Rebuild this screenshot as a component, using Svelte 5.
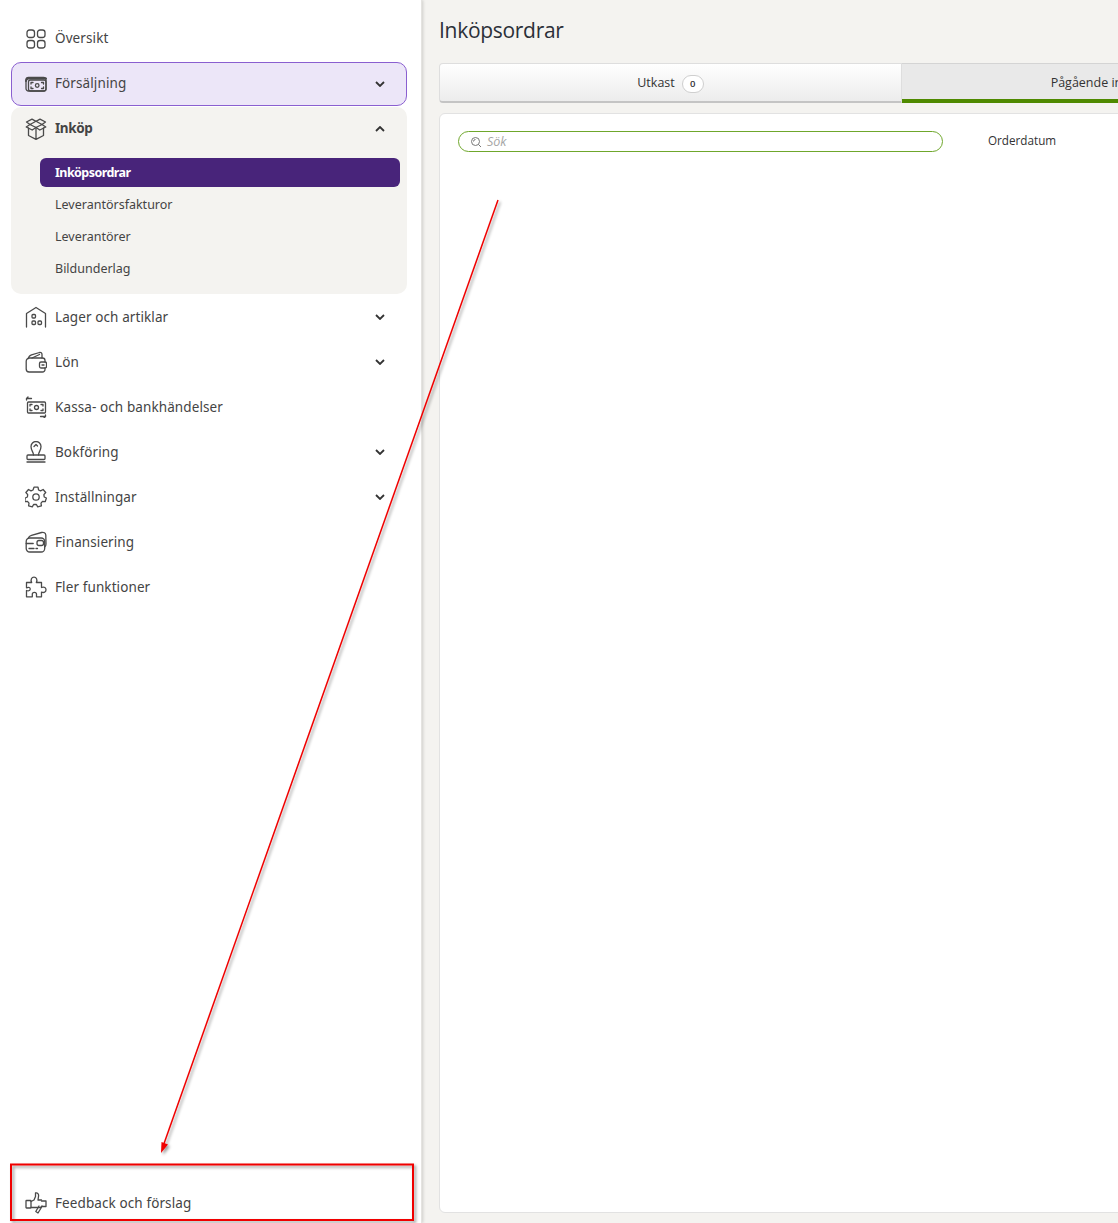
<script>
  const subItems = ["Inköpsordrar", "Leverantörsfakturor", "Leverantörer", "Bildunderlag"]
  const activeSub = "Inköpsordrar"
</script>

{#snippet chevron(up)}
  <svg class="chevron" viewBox="0 0 10 6" width="10" height="6">
    <path d={up ? "M1 5l4-4 4 4" : "M1 1l4 4 4-4"} />
  </svg>
{/snippet}

<div class="page">
  <aside class="sidebar">
    <nav class="nav">
      <a class="item first">
        <svg class="icon" viewBox="0 0 22 22">
          <rect x="2" y="2" width="7.500" height="7.500" rx="2.500" />
          <rect x="12.500" y="2" width="7.500" height="7.500" rx="2.500" />
          <rect x="2" y="12.500" width="7.500" height="7.500" rx="2.500" />
          <rect x="12.500" y="12.500" width="7.500" height="7.500" rx="2.500" />
        </svg>
        <span>Översikt</span>
      </a>

      <a class="item selected">
        <svg class="icon" viewBox="0 0 22 22">
          <rect x="1" y="4.500" width="20" height="13.500" rx="2.500" />
          <path d="M1 8a2.500 2.500 0 0 1 2.500-2.500H21" stroke-width="2" />
          <rect x="3.500" y="7" width="17.500" height="11" rx="2" />
          <circle cx="12.200" cy="12.500" r="1.800" />
          <path d="M6 11v-1.500h2M18.500 14v1.500h-2M6 14v1.500h2M18.500 11V9.500h-2" />
        </svg>
        <span>Försäljning</span>
        {@render chevron(false)}
      </a>

      <div class="group">
        <a class="item open">
          <svg class="icon" viewBox="0 0 22 22">
            <path d="M11 9.500l6-3-6-3.200-6 3.200zM5 6.500L1.200 9l6 3L11 9.500l3.800 2.500 6-3L17 6.500" />
            <path d="M5 6.500L1.500 4l5.500-2.800L11 3.300l4-2.100L20.500 4 17 6.500" />
            <path d="M3.500 10v7.500l7.500 3.800 7.500-3.800V10M11 9.500v11.800" />
          </svg>
          <span>Inköp</span>
          {@render chevron(true)}
        </a>
        <ul class="sublist">
          {#each subItems as sub}
            <li class:active={sub === activeSub}>{sub}</li>
          {/each}
        </ul>
      </div>

      <a class="item">
        <svg class="icon" viewBox="0 0 22 22">
          <path d="M1.500 21V7.500L11 1.500l9.500 6V21" />
          <rect x="7" y="8.500" width="3.500" height="3.500" rx="1" />
          <rect x="7" y="15" width="3.500" height="3.500" rx="1" />
          <rect x="13" y="15" width="3.500" height="3.500" rx="1" />
        </svg>
        <span>Lager och artiklar</span>
        {@render chevron(false)}
      </a>

      <a class="item">
        <svg class="icon" viewBox="0 0 22 22">
          <path d="M3.500 7.500c0-2 1-3 3-3.700L14.500 1.500c1.500-.3 2.500.5 2.500 2V7" />
          <path d="M7 7l7.500-3.500" />
          <path d="M20 11V9.500A2.500 2.500 0 0 0 17.500 7H4.500a3.300 3.300 0 0 0-3.300 3.300v7.700a3 3 0 0 0 3 3h13.300a2.500 2.500 0 0 0 2.500-2.500V17" />
          <rect x="14.500" y="11" width="7" height="6" rx="1.500" />
          <path d="M17 14h2" />
        </svg>
        <span>Lön</span>
        {@render chevron(false)}
      </a>

      <a class="item">
        <svg class="icon" viewBox="0 0 22 22">
          <rect x="2.500" y="6" width="18" height="11" rx="1" />
          <circle cx="11.500" cy="11.500" r="2" />
          <path d="M5 10V8.500h2M18 13v1.500h-2M5 13v1.500h2M18 10V8.500h-2" />
          <path d="M1.500 4V2.500h5M3 1l-1.500 1.500M20.500 19v1.500h-5M19 22l1.500-1.500" />
        </svg>
        <span>Kassa- och bankhändelser</span>
      </a>

      <a class="item">
        <svg class="icon" viewBox="0 0 22 22">
          <path d="M8.500 14c0-3-2.500-4.500-2.500-8.500a5 5 0 0 1 10 0c0 4-2.500 5.500-2.500 8.500" />
          <path d="M9 5.500l2-2 1.500 1.500" />
          <rect x="2" y="14" width="18" height="4.500" rx="1" />
          <path d="M2 21h18" />
        </svg>
        <span>Bokföring</span>
        {@render chevron(false)}
      </a>

      <a class="item">
        <svg class="icon" viewBox="0 0 22 22">
          <path d="M9 1.200h4l.6 2.800 2 .9 2.500-1.400 2.600 3-1.800 2.200.3 2.300 2.200 1-1.200 3.700-2.700-.3-1.500 1.700.4 2.800-3.700 1-1.300-2.400h-2.800l-1.300 2.400-3.700-1 .4-2.800-1.500-1.700-2.700.3L.200 12l2.200-1 .3-2.300L.9 6.500l2.600-3L6 4.900l2-.9z" />
          <circle cx="11" cy="11" r="3.200" />
        </svg>
        <span>Inställningar</span>
        {@render chevron(false)}
      </a>

      <a class="item">
        <svg class="icon" viewBox="0 0 22 22">
          <rect x="1.200" y="7" width="18.500" height="14" rx="3.500" />
          <path d="M3.500 7c.3-1.500 1.500-2.300 3-2.700l10-2.800c2.500-.5 4 .5 4.300 2.500l.2 9c0 1.500-.5 2.500-1.300 3" />
          <path d="M1.200 12.500h7" />
          <rect x="12" y="9.500" width="6.500" height="5" rx="2" />
          <path d="M4 17.500h5M11 17.500h1.500" />
        </svg>
        <span>Finansiering</span>
      </a>

      <a class="item">
        <svg class="icon" viewBox="0 0 22 22">
          <path d="M1.500 6.500h5.200c-1.500-3 0-5.300 2.300-5.300s3.800 2.300 2.300 5.300h5.200v5c3-1.300 4.500.5 4.500 2.300s-1.500 3.500-4.500 2.300v4.700h-5v-2.500c0-2.500-4.200-2.500-4.200 0v2.500H1.500v-6.300c2.500 1 3.700-.3 3.700-1.600S4 10.800 1.500 11.800z" />
        </svg>
        <span>Fler funktioner</span>
      </a>
    </nav>

    <a class="item feedback">
      <svg class="icon" viewBox="0 0 22 22">
        <rect x="1" y="8.500" width="5" height="7.500" rx="0.500" />
        <path d="M6 9.500l3-1.500 1.500-3.500L10.500 1c2-.5 3.500 1 3 3.500L13 8h3.500" />
        <path d="M6 15.500h9.500l1.500-1.500" />
        <path d="M16.500 9H21v5.500h-4L13 21l-2.200-1.500 3.200-5.500" />
      </svg>
      <span>Feedback och förslag</span>
    </a>
  </aside>

  <main class="main">
    <h1>Inköpsordrar</h1>

    <div class="tabs">
      <div class="tab">
        <span>Utkast</span>
        <span class="count">0</span>
      </div>
      <div class="tab current">
        <span>Pågående inköpsordrar</span>
        <span class="count">0</span>
      </div>
    </div>

    <section class="card">
      <div class="filters">
        <label class="search">
          <svg viewBox="0 0 12 12" width="12" height="12">
            <circle cx="5.500" cy="5.500" r="4" />
            <path d="M8.500 8.500l2.500 2.500M3.500 5.500a2 2 0 0 1 2-2" />
          </svg>
          <span>Sök</span>
        </label>
        <span class="filter-label">Orderdatum</span>
      </div>
    </section>
  </main>

  <svg class="annotation" viewBox="0 0 1118 1223" width="1118" height="1223">
    <defs>
      <filter id="soft" x="-20%" y="-20%" width="140%" height="140%">
        <feDropShadow dx="2" dy="2" stdDeviation="1.500" flood-color="#000" flood-opacity="0.4" />
      </filter>
    </defs>
    <g filter="url(#soft)">
      <path d="M498 200L163.500 1145" stroke="#f00000" stroke-width="1.500" fill="none" />
      <path d="M161 1153l0.500-11 6.500 2.500z" fill="#f00000" />
      <rect x="11" y="1164.500" width="402" height="55.500" fill="none" stroke="#f00000" stroke-width="2" />
    </g>
  </svg>
</div>

<style>
  :global(body) {
    background: #f4f3f0;
  }
  .page {
    position: relative;
    display: flex;
    width: 1118px;
    height: 1223px;
    overflow: hidden;
    font-family: "Open Sans", sans-serif;
  }
  .sidebar {
    flex: 0 0 422px;
    display: flex;
    flex-direction: column;
    justify-content: space-between;
    box-sizing: border-box;
    padding: 16px 14px 0 11px;
    background: #fff;
    border-right: 1px solid #e4e3e0;
    box-shadow: 1px 0 3px rgba(0, 0, 0, 0.16);
    font-family: "Noto Sans", sans-serif;
    font-size: 13.500px;
    color: #444;
  }
  .nav {
    display: flex;
    flex-direction: column;
  }
  .item {
    display: flex;
    align-items: center;
    height: 45px;
    flex: none;
    box-sizing: border-box;
    padding: 0 22px 0 14px;
    gap: 8px;
    letter-spacing: 0.1px;
  }
  .item span {
    flex: 1;
    margin-top: 1px;
  }
  .first span,
  .open span {
    margin-top: -1px;
  }
  .selected span {
    margin-top: -3px;
  }
  .feedback span {
    margin-top: -1px;
  }
  .icon {
    width: 22px;
    height: 22px;
    flex: none;
    fill: none;
    stroke: #4a4a4a;
    stroke-width: 1.300;
    stroke-linejoin: round;
    stroke-linecap: round;
  }
  .chevron {
    flex: none;
    fill: none;
    stroke: #333;
    stroke-width: 1.800;
  }
  .selected {
    height: 44px;
    margin-top: 1px;
    background: #ece6f8;
    border: 1px solid #8a5fd0;
    border-radius: 10px;
    padding: 0 21px 0 13px;
  }
  .group {
    margin-top: 1px;
    height: 187px;
    flex: none;
    background: #f4f3f0;
    border-radius: 10px;
  }
  .open {
    height: 43px;
    font-weight: 700;
    letter-spacing: -0.4px;
  }
  .sublist {
    list-style: none;
    margin: 8px 7px 0 29px;
    padding: 0;
    font-size: 12.500px;
  }
  .sublist li {
    height: 32px;
    line-height: 29px;
    padding-left: 15px;
  }
  .sublist .active {
    height: 29px;
    margin-bottom: 3px;
    background: #48247a;
    border-radius: 6px;
    color: #fff;
    font-weight: 700;
    letter-spacing: -0.55px;
  }
  .feedback {
    height: 40px;
  }
  .main {
    flex: 1;
    min-width: 0;
    box-sizing: border-box;
    padding: 0 0 10px 17px;
    display: flex;
    flex-direction: column;
    overflow: hidden;
    color: #333;
  }
  h1 {
    margin: 0;
    height: 63px;
    line-height: 61px;
    font-size: 21px;
    font-weight: 400;
    letter-spacing: -0.3px;
    color: #2b2f38;
  }
  .tabs {
    display: grid;
    grid-template-columns: 463px 463px;
    width: 926px;
    height: 40px;
    flex: none;
  }
  .tab {
    display: flex;
    align-items: center;
    justify-content: center;
    gap: 7px;
    box-sizing: border-box;
    font-size: 12.500px;
    background: linear-gradient(#ffffff, #ececec);
    border: 1px solid #dedede;
    border-bottom: 2px solid #c4c4c4;
    border-radius: 4px 0 0 4px;
  }
  .tab.current {
    background: #e9e9e9;
    border: 0;
    border-top: 1px solid #d4d4d4;
    border-bottom: 4px solid #4f8a00;
    border-radius: 0;
    padding-top: 1px;
  }
  .count {
    min-width: 20px;
    height: 16px;
    margin-top: 2px;
    line-height: 16px;
    font-size: 9.500px;
    font-weight: 600;
    text-align: center;
    background: #fff;
    border: 1px solid #cfcfcf;
    border-radius: 9px;
  }
  .card {
    flex: 1;
    width: 900px;
    margin-top: 10px;
    box-sizing: border-box;
    padding: 17px 18px;
    background: #fff;
    border: 1px solid #e2e2e2;
    border-radius: 6px;
  }
  .filters {
    display: flex;
    align-items: center;
    gap: 45px;
  }
  .search {
    display: flex;
    align-items: center;
    gap: 5px;
    box-sizing: border-box;
    width: 485px;
    height: 21px;
    padding-left: 11px;
    border: 1px solid #6fa72c;
    border-radius: 11px;
    font-size: 12.500px;
    font-style: italic;
    color: #a5a5a5;
  }
  .search svg {
    fill: none;
    stroke: #777;
    stroke-width: 1;
  }
  .filter-label {
    font-size: 11.700px;
    margin-top: -4px;
  }
  .annotation {
    position: absolute;
    inset: 0;
    pointer-events: none;
  }
</style>
